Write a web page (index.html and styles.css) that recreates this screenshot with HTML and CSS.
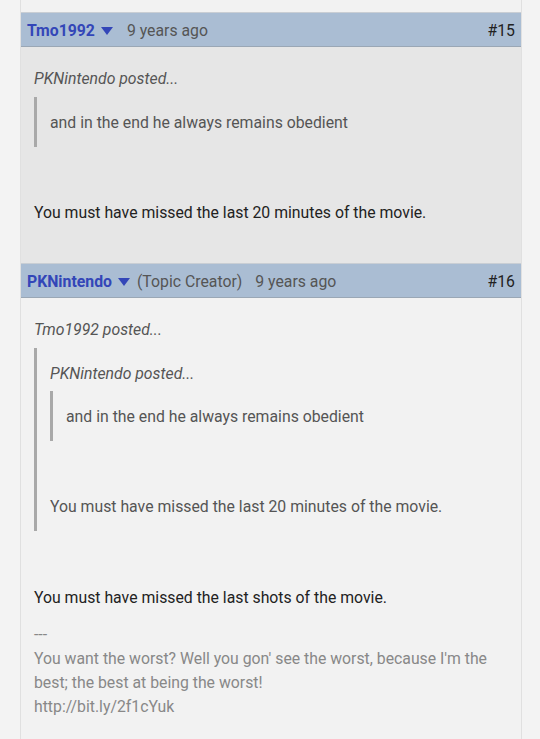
FILE: index.html
```html
<!DOCTYPE html>
<html>
<head>
<meta charset="utf-8">
<link rel="stylesheet" href="styles.css">
</head>
<body>
<div class="column">
  <div class="prev"></div>
  <div class="post">
    <div class="head">
      <span class="user">Tmo1992</span>
      <svg class="tri" width="12" height="8" viewBox="0 0 12 8"><polygon points="0,0 12,0 6,8" fill="#3346b8"/></svg>
      <span class="meta">9 years ago</span>
      <span class="num">#15</span>
    </div>
    <div class="body body-alt">
      <div class="cite">PKNintendo posted...</div>
      <blockquote class="quote">and in the end he always remains obedient</blockquote>
      <p class="text">You must have missed the last 20 minutes of the movie.</p>
    </div>
  </div>
  <div class="post">
    <div class="head">
      <span class="user">PKNintendo</span>
      <svg class="tri" width="12" height="8" viewBox="0 0 12 8"><polygon points="0,0 12,0 6,8" fill="#3346b8"/></svg>
      <span class="meta meta-tc">(Topic Creator)</span>
      <span class="meta">9 years ago</span>
      <span class="num">#16</span>
    </div>
    <div class="body">
      <div class="cite">Tmo1992 posted...</div>
      <blockquote class="quote">
        <div class="cite">PKNintendo posted...</div>
        <blockquote class="quote quote-inner">and in the end he always remains obedient</blockquote>
        <p class="text text-quoted">You must have missed the last 20 minutes of the movie.</p>
      </blockquote>
      <p class="text text-main">You must have missed the last shots of the movie.</p>
      <div class="sig">
        <div>---</div>
        <div>You want the worst? Well you gon' see the worst, because I'm the best; the best at being the worst!</div>
        <div>http://bit.ly/2f1cYuk</div>
      </div>
    </div>
  </div>
</div>
</body>
</html>
```

FILE: styles.css
```css
html, body {
  margin: 0;
  padding: 0;
  background: #f3f3f3;
  font-family: Roboto, "Noto Sans", sans-serif;
  font-size: 15.8px;
  line-height: 24px;
  color: #222;
}
.column {
  margin-left: 20px;
  width: 500px;
  border-left: 1px solid #e0e0e0;
  border-right: 1px solid #e0e0e0;
  background: #f2f2f2;
  height: 739px;
  overflow: hidden;
}
.prev {
  height: 12px;
  background: #f2f2f2;
}
.head {
  display: flex;
  align-items: center;
  height: 31px;
  padding: 2px 6px 0 6px;
  background: #aabdd3;
  border-top: 1px solid #c9ced4;
  border-bottom: 1px solid #9aa7b5;
}
.user {
  color: #3346b8;
  font-weight: bold;
}
.tri {
  margin-left: 6px;
  margin-right: 14px;
  margin-top: 1px;
}
.meta {
  color: #555;
  margin-right: 13px;
}
.meta-tc {
  margin-left: -7px;
}
.num {
  margin-left: auto;
  color: #222;
}
.body {
  padding: 20px 13px 0 13px;
  background: #f2f2f2;
}
.body-alt {
  background: #e6e6e6;
  padding-bottom: 38px;
}
.cite {
  font-style: italic;
  color: #555;
}
.quote {
  margin: 6px 0 0 0;
  padding: 14px 0 12px 13px;
  border-left: 3px solid #a9a9a9;
  color: #555;
}
.quote-inner {
  margin-top: 5px;
}
.text {
  margin: 54px 0 0 0;
}
.text-quoted {
  color: #555;
}
.text-main {
  margin-top: 55px;
}
.sig {
  margin-top: 13px;
  color: #888;
}
```
